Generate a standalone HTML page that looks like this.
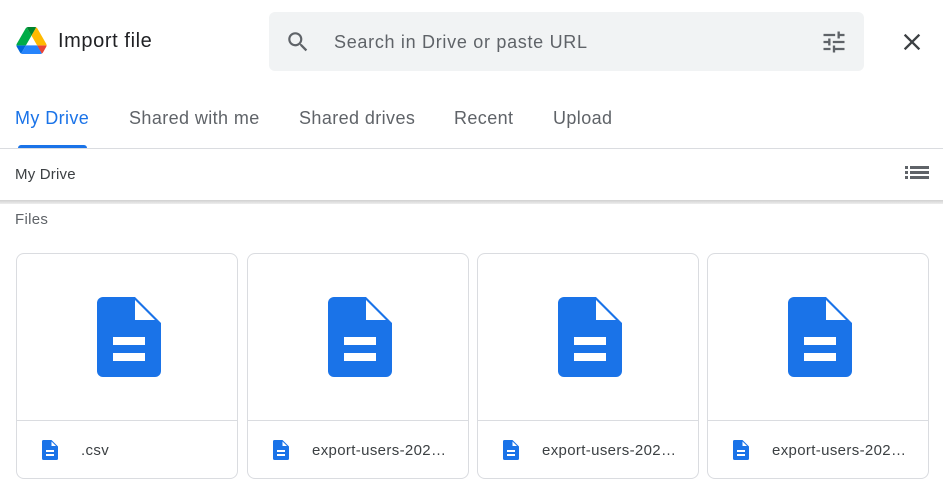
<!DOCTYPE html>
<html><head><style>
*{margin:0;padding:0;box-sizing:border-box}
body{width:943px;height:488px;background:#fff;font-family:"Liberation Sans",Arial,sans-serif;position:relative;overflow:hidden}
.a{position:absolute}
.tab{position:absolute;top:108px;font-size:18px;letter-spacing:.4px;color:#5f6368}
.card{position:absolute;top:253px;width:222px;height:226px;border:1px solid #dadce0;border-radius:8px;overflow:hidden}
.card .sep{position:absolute;left:0;right:0;top:166px;border-top:1px solid #dadce0}
.card .big{position:absolute;left:80px;top:43px}
.card .sm{position:absolute;left:25px;top:186px}
.card .nm{position:absolute;left:64px;top:188px;font-size:15px;letter-spacing:.35px;color:#3c4043;white-space:nowrap}
</style></head><body>
<svg class="a" style="left:16px;top:27px" width="31" height="27" viewBox="0 0 87.3 78">
<path d="M6.6 66.85l3.85 6.65c.8 1.4 1.950 2.5 3.3 3.3L27.5 53H0c0 1.55.4 3.1 1.2 4.5z" fill="#0066da"/>
<path d="M43.65 25L29.9 1.2c-1.35.8-2.5 1.9-3.3 3.3L1.2 48.5C.4 49.9 0 51.45 0 53h27.5z" fill="#00ac47"/>
<path d="M73.55 76.8c1.35-.8 2.5-1.9 3.3-3.3l1.6-2.75 7.65-13.25c.8-1.4 1.2-2.95 1.2-4.5H59.8l5.85 11.5z" fill="#ea4335"/>
<path d="M43.65 25L57.4 1.2C56.05.4 54.5 0 52.9 0H34.4c-1.6 0-3.15.45-4.5 1.2z" fill="#00832d"/>
<path d="M59.8 53H27.5L13.75 76.8c1.35.8 2.9 1.2 4.5 1.2h50.8c1.6 0 3.15-.45 4.5-1.2z" fill="#2684fc"/>
<path d="M73.4 26.5L60.7 4.5c-.8-1.4-1.95-2.5-3.3-3.3L43.650 25 59.8 53h27.45c0-1.55-.4-3.1-1.2-4.5z" fill="#ffba00"/>
</svg>
<div class="a" style="left:58px;top:30px;font-size:20px;letter-spacing:.6px;color:#202124">Import file</div>
<div class="a" style="left:269px;top:12px;width:595px;height:59px;background:#f1f3f4;border-radius:6px"></div>
<svg class="a" style="left:285px;top:29px" width="26" height="26" viewBox="0 0 24 24"><path fill="#5f6368" d="M15.5 14h-.79l-.28-.27A6.47 6.47 0 0016 9.5 6.5 6.5 0 109.5 16c1.61 0 3.09-.59 4.230-1.57l.27.28v.79l5 4.99L20.49 19l-4.99-5zm-6 0C7.01 14 5 11.99 5 9.5S7.01 5 9.5 5 14 7.01 14 9.5 11.99 14 9.5 14z"/></svg>
<div class="a" style="left:334px;top:32px;font-size:18px;letter-spacing:.7px;color:#5f6368">Search in Drive or paste URL</div>
<svg class="a" style="left:820px;top:28px" width="28" height="28" viewBox="0 0 24 24"><path fill="#5f6368" d="M3 17v2h6v-2H3zM3 5v2h10V5H3zm10 16v-2h8v-2h-8v-2h-2v6h2zM7 9v2H3v2h4v2h2V9H7zm14 4v-2H11v2h10zm-6-4h2V7h4V5h-4V3h-2v6z"/></svg>
<svg class="a" style="left:898px;top:28px" width="28" height="28" viewBox="0 0 24 24"><path fill="#3c4043" d="M19 6.41L17.59 5 12 10.59 6.41 5 5 6.41 10.59 12 5 17.59 6.41 19 12 13.41 17.59 19 19 17.59 13.41 12z"/></svg>
<div class="tab" style="left:15px;color:#1a73e8">My Drive</div>
<div class="a" style="left:18px;top:145px;width:69px;height:3px;background:#1a73e8;border-radius:3px 3px 0 0"></div>
<div class="tab" style="left:129px">Shared with me</div>
<div class="tab" style="left:299px">Shared drives</div>
<div class="tab" style="left:454px">Recent</div>
<div class="tab" style="left:553px">Upload</div>
<div class="a" style="left:0;top:148px;width:943px;height:1px;background:#dadce0"></div>
<div class="a" style="left:15px;top:166px;font-size:15px;letter-spacing:.2px;color:#3c4043">My Drive</div>
<svg class="a" style="left:905px;top:163px" width="24" height="20" viewBox="0 0 24 20"><g fill="#5f6368"><rect x="0" y="3" width="3" height="3"/><rect x="5" y="3" width="19" height="3"/><rect x="0" y="8" width="3" height="3"/><rect x="5" y="8" width="19" height="3"/><rect x="0" y="13" width="3" height="3"/><rect x="5" y="13" width="19" height="3"/></g></svg>
<div class="a" style="left:0;top:200px;width:943px;height:4px;background:linear-gradient(#d0d0d0,#eee)"></div>
<div class="a" style="left:15px;top:211px;font-size:15px;letter-spacing:.3px;color:#5f6368">Files</div>
<div class="card" style="left:16px"><svg class="big" width="64" height="80" viewBox="0 0 64 80"><path fill="#1a73e8" d="M6 0h32l26 26v48a6 6 0 01-6 6H6a6 6 0 01-6-6V6a6 6 0 016-6z"/><path fill="#fff" d="M38 3v20h20z"/><rect x="16" y="40" width="32" height="8" fill="#fff"/><rect x="16" y="56" width="32" height="8" fill="#fff"/></svg><div class="sep"></div><svg class="sm" width="16" height="20" viewBox="0 0 64 80"><path fill="#1a73e8" d="M6 0h32l26 26v48a6 6 0 01-6 6H6a6 6 0 01-6-6V6a6 6 0 016-6z"/><path fill="#fff" d="M38 6v18h18z"/><rect x="16" y="40" width="32" height="8" fill="#fff"/><rect x="16" y="56" width="32" height="8" fill="#fff"/></svg><div class="nm">.csv</div></div>
<div class="card" style="left:247px"><svg class="big" width="64" height="80" viewBox="0 0 64 80"><path fill="#1a73e8" d="M6 0h32l26 26v48a6 6 0 01-6 6H6a6 6 0 01-6-6V6a6 6 0 016-6z"/><path fill="#fff" d="M38 3v20h20z"/><rect x="16" y="40" width="32" height="8" fill="#fff"/><rect x="16" y="56" width="32" height="8" fill="#fff"/></svg><div class="sep"></div><svg class="sm" width="16" height="20" viewBox="0 0 64 80"><path fill="#1a73e8" d="M6 0h32l26 26v48a6 6 0 01-6 6H6a6 6 0 01-6-6V6a6 6 0 016-6z"/><path fill="#fff" d="M38 6v18h18z"/><rect x="16" y="40" width="32" height="8" fill="#fff"/><rect x="16" y="56" width="32" height="8" fill="#fff"/></svg><div class="nm">export-users-202…</div></div>
<div class="card" style="left:477px"><svg class="big" width="64" height="80" viewBox="0 0 64 80"><path fill="#1a73e8" d="M6 0h32l26 26v48a6 6 0 01-6 6H6a6 6 0 01-6-6V6a6 6 0 016-6z"/><path fill="#fff" d="M38 3v20h20z"/><rect x="16" y="40" width="32" height="8" fill="#fff"/><rect x="16" y="56" width="32" height="8" fill="#fff"/></svg><div class="sep"></div><svg class="sm" width="16" height="20" viewBox="0 0 64 80"><path fill="#1a73e8" d="M6 0h32l26 26v48a6 6 0 01-6 6H6a6 6 0 01-6-6V6a6 6 0 016-6z"/><path fill="#fff" d="M38 6v18h18z"/><rect x="16" y="40" width="32" height="8" fill="#fff"/><rect x="16" y="56" width="32" height="8" fill="#fff"/></svg><div class="nm">export-users-202…</div></div>
<div class="card" style="left:707px"><svg class="big" width="64" height="80" viewBox="0 0 64 80"><path fill="#1a73e8" d="M6 0h32l26 26v48a6 6 0 01-6 6H6a6 6 0 01-6-6V6a6 6 0 016-6z"/><path fill="#fff" d="M38 3v20h20z"/><rect x="16" y="40" width="32" height="8" fill="#fff"/><rect x="16" y="56" width="32" height="8" fill="#fff"/></svg><div class="sep"></div><svg class="sm" width="16" height="20" viewBox="0 0 64 80"><path fill="#1a73e8" d="M6 0h32l26 26v48a6 6 0 01-6 6H6a6 6 0 01-6-6V6a6 6 0 016-6z"/><path fill="#fff" d="M38 6v18h18z"/><rect x="16" y="40" width="32" height="8" fill="#fff"/><rect x="16" y="56" width="32" height="8" fill="#fff"/></svg><div class="nm">export-users-202…</div></div>
</body></html>
